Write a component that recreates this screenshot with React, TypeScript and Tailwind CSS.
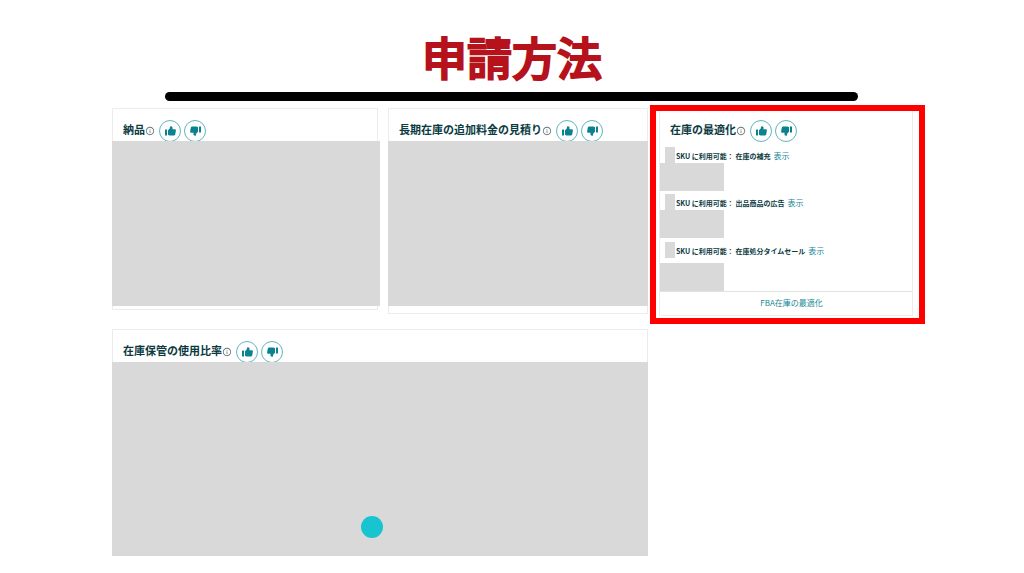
import { MdInfoOutline } from "react-icons/md";

function Thumb({ down = false }: { down?: boolean }) {
  return (
    <svg
      viewBox="0 0 22 20"
      fill="currentColor"
      aria-hidden="true"
      className={down ? "h-[10px] w-[11px] rotate-180" : "h-[10px] w-[11px]"}
    >
      <rect x="0" y="7" width="4" height="12" rx="0.6" />
      <path d="M6 8.5 L9.5 5 L10 1.6 Q10.4 0.4 12 0.5 Q15.4 1 15.2 4 L14.8 6.4 H19.8 Q22 6.5 21.8 8.8 L20.4 16.8 Q19.9 19 17.6 19 H9.5 Q7.6 19 6 17.4 Z" />
    </svg>
  );
}

function FeedbackButtons({ topic }: { topic: string }) {
  const style =
    "flex size-[22px] items-center justify-center rounded-full border border-[#5fb6bf] text-[#0a8290]";
  return (
    <div className="ml-1 flex gap-[3px]">
      <button type="button" aria-label={`${topic} 高評価`} className={style}>
        <Thumb />
      </button>
      <button type="button" aria-label={`${topic} 低評価`} className={style}>
        <Thumb down />
      </button>
    </div>
  );
}

function CardHeader({ title }: { title: string }) {
  return (
    <header className="flex h-8 items-start pt-[11px] pl-[10px]">
      <h2 className="text-[11px] leading-[18px] font-bold whitespace-nowrap text-[#0b3a3f]">{title}</h2>
      <MdInfoOutline size={10} className="mt-[6px] text-[#6b7475]" />
      <FeedbackButtons topic={title} />
    </header>
  );
}

const suggestions = [
  { label: "在庫の補充", row: "", box: "" },
  { label: "出品商品の広告", row: "", box: "" },
  { label: "在庫処分タイムセール", row: "pt-px", box: "pt-[5px]" },
];

export default function App() {
  return (
    <div className="min-h-screen bg-white font-['Noto_Sans_CJK_JP',sans-serif]" lang="ja">
      <h1 className="pt-[25px] pb-[3px] text-center text-[45px] leading-[64px] font-medium text-[#b5121b] [-webkit-text-stroke:2px_#b5121b] [stroke-linejoin:round]">
        申請方法
      </h1>
      <div className="mr-[166px] ml-[165px] h-[9px] rounded-full bg-black" />

      <main className="mt-1 mr-[99px] ml-28 grid grid-cols-[536fr_275fr] items-start gap-x-0.5">
        <div className="pt-[3px]">
          <div className="grid grid-cols-[268fr_260fr] items-start gap-2">
            <section className="mr-0.5 border border-[#ececec] pb-[3px]">
              <CardHeader title="納品" />
              <div className="relative -mr-[3px] -ml-px h-[165px] bg-[#d9d9d9]" />
            </section>
            <section className="border border-[#ececec] pb-[7px]">
              <CardHeader title="長期在庫の追加料金の見積り" />
              <div className="relative -mx-px h-[165px] bg-[#d9d9d9]" />
            </section>
          </div>
          <section className="mt-[15px] border border-b-0 border-[#ececec]">
            <CardHeader title="在庫保管の使用比率" />
            <div className="relative -mx-px h-[194px] bg-[#d9d9d9]">
              <span className="absolute bottom-[18px] left-[249px] size-[22px] rounded-full bg-[#17c4cf]" />
            </div>
          </section>
        </div>

        <section className="border-[6px] border-[#ff0000] px-[3px] pb-0.5">
          <div className="mr-[3px] flow-root border-x border-b border-[#ececec]">
            <div className="-mt-0.5">
              <CardHeader title="在庫の最適化" />
            </div>
            <ul className="flex flex-col gap-[3px] pt-[6px]">
              {suggestions.map(({ label, row, box }) => (
                <li key={label} className={row}>
                  <div className="flex h-4 items-center pl-[5px] text-[7px] whitespace-nowrap">
                    <span className="mr-px h-4 w-[10px] bg-[#d9d9d9]" />
                    <span className="pt-0.5 font-bold text-[#0b3a3f]">SKU に利用可能： {label}</span>
                    <a href="#" className="ml-[3px] pt-0.5 text-[8px] text-[#178795]">
                      表示
                    </a>
                  </div>
                  <div className={box}>
                    <div className="h-7 w-16 bg-[#d9d9d9]" />
                  </div>
                </li>
              ))}
            </ul>
            <footer className="border-t border-[#e2e2e2] pt-[3px] pb-1 pl-[11px] text-center text-[8px] leading-4 text-[#178795]">
              <a href="#">FBA在庫の最適化</a>
            </footer>
          </div>
        </section>
      </main>
    </div>
  );
}
